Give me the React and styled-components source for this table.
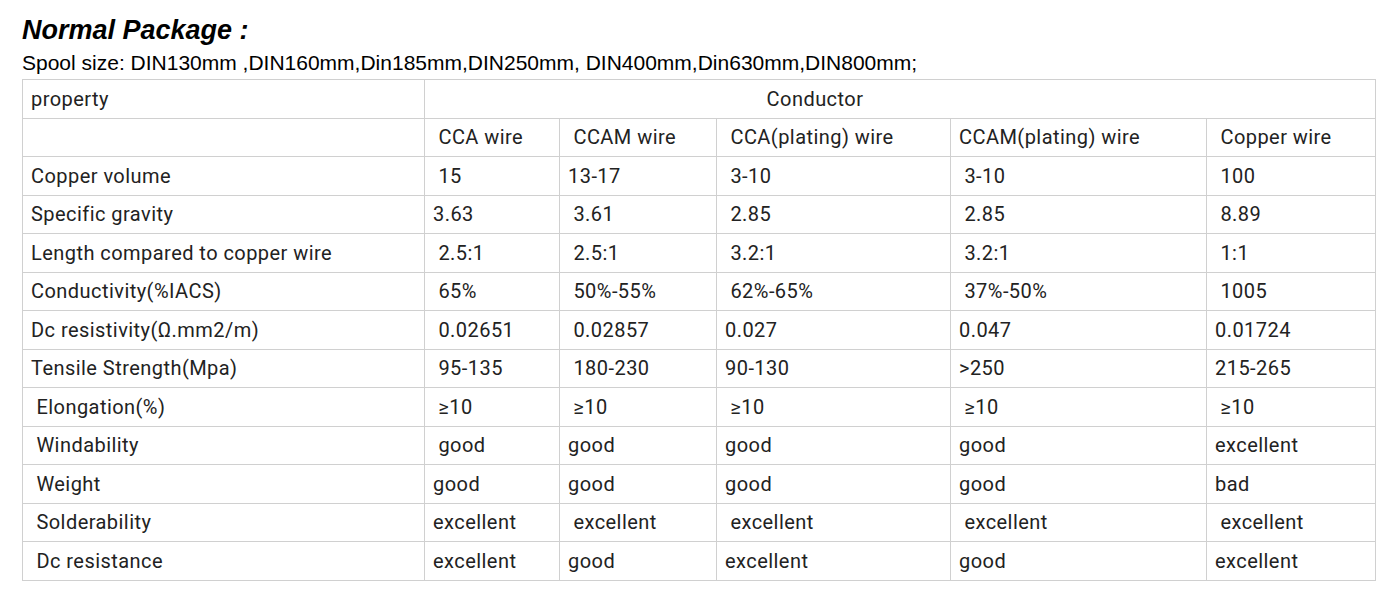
import styled, { createGlobalStyle } from "styled-components";

const Global = createGlobalStyle`
  body {
    margin: 0;
    background: #fff;
  }
`;

const cols = [402, 135, 157, 234, 256, 169];

const rows = [
  ["", " CCA wire", " CCAM wire", " CCA(plating) wire", "CCAM(plating) wire", " Copper wire"],
  ["Copper volume", " 15", "13-17", " 3-10", " 3-10", " 100"],
  ["Specific gravity", "3.63", " 3.61", " 2.85", " 2.85", " 8.89"],
  ["Length compared to copper wire", " 2.5:1", " 2.5:1", " 3.2:1", " 3.2:1", " 1:1"],
  ["Conductivity(%IACS)", " 65%", " 50%-55%", " 62%-65%", " 37%-50%", " 1005"],
  ["Dc resistivity(Ω.mm2/m)", " 0.02651", " 0.02857", "0.027", "0.047", "0.01724"],
  ["Tensile Strength(Mpa)", " 95-135", " 180-230", "90-130", ">250", "215-265"],
  [" Elongation(%)", " ≥10", " ≥10", " ≥10", " ≥10", " ≥10"],
  [" Windability", " good", "good", "good", "good", "excellent"],
  [" Weight", "good", "good", "good", "good", "bad"],
  [" Solderability", "excellent", " excellent", " excellent", " excellent", " excellent"],
  [" Dc resistance", "excellent", "good", "excellent", "good", "excellent"],
];

export default function App() {
  return (
    <Page>
      <Global />
      <Title>Normal Package :</Title>
      <Spool>
        Spool size: DIN130mm ,DIN160mm,Din185mm,DIN250mm, DIN400mm,Din630mm,DIN800mm;
      </Spool>
      <Table>
        <colgroup>
          {cols.map((w, i) => <col key={i} style={{ width: w }} />)}
        </colgroup>
        <tbody>
          <tr>
            <Cell>property</Cell>
            <Cell colSpan={5} center>Conductor</Cell>
          </tr>
          {rows.map((r, i) => (
            <tr key={i}>
              {r.map((c, j) => <Cell key={j}>{c}</Cell>)}
            </tr>
          ))}
        </tbody>
      </Table>
    </Page>
  );
}

const Page = styled.div`
  padding: 15px 22px 20px 22px;
  width: 1353px;
`;

const Title = styled.h2`
  margin: 0;
  font-family: "Liberation Sans", Arial, sans-serif;
  font-size: 27px;
  font-weight: bold;
  font-style: italic;
  line-height: 30px;
  color: #000;
`;

const Spool = styled.p`
  margin: 7px 0 5px 0;
  font-family: "Liberation Sans", Arial, sans-serif;
  font-size: 21px;
  line-height: 22px;
  color: #000;
`;

const Table = styled.table`
  width: 1353px;
  table-layout: fixed;
  border-collapse: collapse;
  font-family: Roboto, "Liberation Sans", sans-serif;
  font-size: 20px;
  letter-spacing: 0.45px;
  color: #222;

  tr {
    height: 38.5px;
  }
`;

const Cell = styled.td`
  border: 1px solid #d0d0d0;
  padding: 0 ${(p) => (p.center ? "178px" : "8px")} 0 8px;
  text-align: ${(p) => (p.center ? "center" : "left")};
  vertical-align: middle;
  white-space: pre;
`;
